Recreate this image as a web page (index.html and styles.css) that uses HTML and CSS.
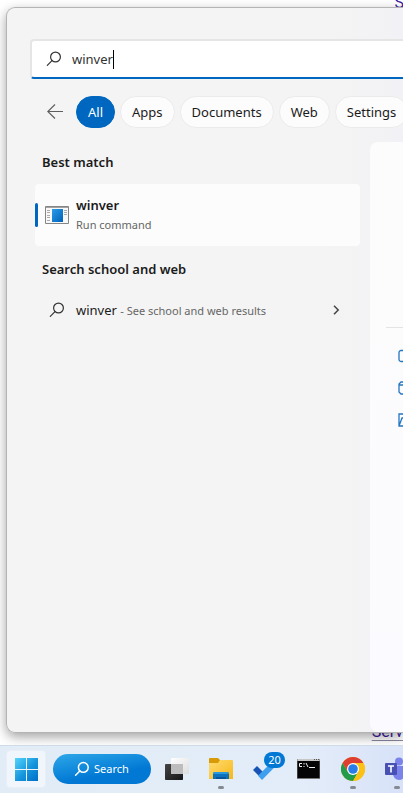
FILE: index.html
```html
<!DOCTYPE html>
<html lang="en">
<head>
<meta charset="utf-8">
<meta name="viewport" content="width=device-width, initial-scale=1">
<title>Search</title>
<link rel="stylesheet" href="styles.css">
</head>
<body>
<main class="desktop">
  <a class="page-link page-link-top" href="#">S</a>
  <a class="page-link page-link-bottom" href="#">Serv</a>
  <section class="panel">
    <label class="search-box">
      <svg class="lens" width="16" height="16" viewBox="0 0 16 16" fill="none" stroke="#333" stroke-width="1.2" stroke-linecap="round"><circle cx="9.5" cy="6" r="4.9"/><path d="M6 9.6 1.3 14.3"/></svg>
      <input class="search-input" type="text" value="winver" size="4" aria-label="Search">
      <span class="caret"></span>
    </label>
    <nav class="filters">
      <button class="back" type="button" aria-label="Back"><svg width="16" height="16" viewBox="0 0 16 16" fill="none" stroke="#5e5e5e" stroke-width="1.1"><path d="M16 7.5H.8M8 .5l-7.2 7L8 14.5"/></svg></button>
      <button class="filter filter-active" type="button">All</button>
      <button class="filter" type="button">Apps</button>
      <button class="filter" type="button">Documents</button>
      <button class="filter" type="button">Web</button>
      <button class="filter" type="button">Settings</button>
    </nav>
    <div class="content">
      <div class="results">
        <h2 class="heading">Best match</h2>
        <button class="best" type="button">
          <svg width="24" height="18" viewBox="0 0 24 18"><path fill="#f8f8f8" stroke="#858585" d="M.5.5h23v17H.5z"/><path fill="#a2a2a2" d="M1 1h22v1H1z"/><path stroke="#aaa" d="M2 4.5h3M2 6.5h3M2 9.5h3M2 11.5h3M2 14.5h3M19 4.5h3M19 6.5h3M19 8.5h3"/><defs><linearGradient id="app" x2="1" y2="1"><stop stop-color="#2b9be8"/><stop offset="1" stop-color="#0062b8"/></linearGradient></defs><path fill="url(#app)" d="M7 3h11v13H7z"/></svg>
          <span class="best-text"><strong class="best-name">winver</strong><span class="muted">Run command</span></span>
        </button>
        <h2 class="heading">Search school and web</h2>
        <button class="web-result" type="button">
          <svg class="lens" width="16" height="16" viewBox="0 0 16 16" fill="none" stroke="#333" stroke-width="1.2" stroke-linecap="round"><circle cx="9.5" cy="6" r="4.9"/><path d="M6 9.6 1.3 14.3"/></svg>
          <span class="web-text">winver <span class="muted">- See school and web results</span></span>
          <svg width="8" height="10" viewBox="0 0 8 10" fill="none" stroke="#444" stroke-width="1.5"><path d="m2 .8 4.2 4.2L2 9.2"/></svg>
        </button>
      </div>
      <aside class="preview">
        <div class="actions">
          <svg width="16" height="16" viewBox="0 0 16 16" fill="none" stroke="#2376c2" stroke-width="1.3"><rect x="1" y="2.5" width="14" height="11" rx="2"/></svg>
          <svg width="16" height="16" viewBox="0 0 16 16" fill="none" stroke="#2376c2" stroke-width="1.3"><path d="M3 2h4l2 2h6v10H3l-2-2V4zM1 5h14"/></svg>
          <svg width="16" height="16" viewBox="0 0 16 16" fill="none" stroke="#2376c2" stroke-width="1.3"><path d="M1 14V2h14v12zL4 6h11"/></svg>
        </div>
      </aside>
    </div>
  </section>
</main>
<footer class="taskbar">
  <button class="task task-start" type="button" aria-label="Start">
    <svg width="23" height="23" viewBox="0 0 23 23"><defs><linearGradient id="win" gradientUnits="userSpaceOnUse" x1="0" y1="0" x2="23" y2="23"><stop stop-color="#55d5fc"/><stop offset=".55" stop-color="#1594dc"/><stop offset="1" stop-color="#006fc9"/></linearGradient></defs><path fill="url(#win)" d="M0 0h11v11H0zM12 0h11v11H12zM0 12h11v11H0zM12 12h11v11H12z"/></svg>
  </button>
  <button class="task-search" type="button">
    <svg width="16" height="16" viewBox="0 0 16 16" fill="none" stroke="#fff" stroke-width="1.5" stroke-linecap="round"><circle cx="9.3" cy="6.4" r="4.9"/><path d="M5.8 10 1.6 14.2"/></svg>
    Search
  </button>
  <div class="apps">
    <button class="task" type="button" aria-label="Task view">
      <svg width="24" height="24" viewBox="0 0 24 24"><defs><linearGradient id="tvd" x2="1" y2="1"><stop stop-color="#454545"/><stop offset="1" stop-color="#151515"/></linearGradient><linearGradient id="tvl" x2="1" y2="1"><stop stop-color="#fff"/><stop offset="1" stop-color="#ddd"/></linearGradient></defs><rect y="7" width="18" height="16" rx=".8" fill="url(#tvd)"/><rect x="6" y="1" width="18" height="16" rx=".8" fill="url(#tvl)"/><path fill="#bdbdbd" d="M6 7h12v10H6z"/></svg>
    </button>
    <button class="task running" type="button" aria-label="File Explorer">
      <svg width="24" height="24" viewBox="0 0 24 24"><defs><linearGradient id="fold" x2="1" y2="1"><stop stop-color="#ffdc70"/><stop offset="1" stop-color="#f6b719"/></linearGradient></defs><path fill="#d99a08" d="M0 2q0-1 1-1h8l2 2h12v5H0z"/><path fill="url(#fold)" d="M0 6h9l2-3h12q1 0 1 1v18H0z"/><path fill="#0d72bd" d="M4 22v-5q0-2 2-2h12q2 0 2 2v5z"/><path fill="#2c99dd" d="M6 15h12q2 0 2 2H4q0-2 2-2z"/><path fill="#075596" d="M7 20h10v2H7z"/></svg>
    </button>
    <button class="task" type="button" aria-label="To Do">
      <svg width="24" height="24" viewBox="0 0 24 24"><path fill="#1753b4" d="m0 13 4-4 6 6-4 4z"/><path fill="#3f9fef" d="M5 18.8 17.8 6l4 4L9 23z"/></svg>
      <span class="badge">20</span>
    </button>
    <button class="task" type="button" aria-label="Command Prompt">
      <svg width="24" height="24" viewBox="0 0 24 24"><path fill="#777" d="M0 2h23v20H0z"/><path fill="#c6c6c6" d="M.5 2h22v2H.5z"/><path fill="#555" d="M17 2h1v1h-1zM19 2h1v1h-1zM21 2h1v1h-1z"/><path fill="#050505" d="M.5 4h22v17H.5z"/><path fill="none" stroke="#eee" d="M5 6.5H2.5v3H5M7 6v1.5M7 9v1M9 6l2 4M12 10.5h6"/></svg>
    </button>
    <button class="task running" type="button" aria-label="Chrome">
      <svg width="24" height="24" viewBox="0 0 24 24"><circle cx="12" cy="12" r="12" fill="#fbc116"/><path fill="#df3f32" d="M1.6 6A12 12 0 0 1 22.4 6H12L6.8 15z"/><path fill="#229b4b" d="M1.6 6A12 12 0 0 0 12 24l5.2-9L6.8 15z"/><path fill="#fbc116" d="M22.4 6A12 12 0 0 1 12 24l5.2-9L12 6z"/><circle cx="12" cy="12" r="6" fill="#fff"/><circle cx="12" cy="12" r="4.8" fill="#287de9"/></svg>
    </button>
    <button class="task running" type="button" aria-label="Teams">
      <svg width="24" height="24" viewBox="0 0 24 24"><circle cx="14" cy="4.5" r="4" fill="#7b83eb"/><circle cx="21.5" cy="5.5" r="2.5" fill="#5059c9"/><path fill="#7b83eb" d="M8 9h12v8a6 6 0 0 1-12 0z"/><path fill="#5059c9" d="M20 9h4v7a4 4 0 0 1-4 3z"/><rect y="6" width="12" height="12" rx="1" fill="#4850b4"/><path fill="none" stroke="#fff" stroke-width="1.6" d="M3 9h6M6 9v6.5"/></svg>
    </button>
  </div>
</footer>
</body>
</html>
```
FILE: styles.css
```css
* { box-sizing: border-box; }
body {
  margin: 0;
  min-height: 100vh;
  display: flex;
  flex-direction: column;
  overflow-x: hidden;
  background: #fff;
  color: #1b1b1b;
  font: 13px/20px "Noto Sans", "Open Sans", sans-serif;
}
button {
  margin: 0;
  padding: 0;
  border: 0;
  background: none;
  color: inherit;
  font: inherit;
  text-align: left;
}
svg { display: block; flex: none; }
.desktop {
  flex: 1;
  display: flex;
  position: relative;
  overflow: hidden;
  padding: 7px 0 12px 6px;
}
.page-link {
  position: absolute;
  font: 16px/20px Roboto, sans-serif;
  color: #401a9c;
}
.page-link-top { right: -1px; top: -7px; text-decoration: none; }
.page-link-bottom {
  right: 0;
  bottom: 3px;
  padding-bottom: 0;
  text-decoration-color: #8a86a0;
  text-underline-offset: 3px;
}
.panel {
  flex: 1;
  min-width: 0;
  position: relative;
  display: flex;
  flex-direction: column;
  border: 1px solid #b4b4b4;
  border-right: 0;
  border-radius: 9px 0 0 9px;
  background: linear-gradient(90deg, #f4f4f4 80%, #f2f2f6);
  box-shadow: 0 4px 12px rgba(0, 0, 0, .36);
}
.search-box {
  display: flex;
  align-items: center;
  height: 40px;
  margin: 31px 0 0 23px;
  padding-left: 14px;
  border: 2px solid #e5e5e5;
  border-right: 0;
  border-bottom-color: #0067c0;
  border-radius: 4px 0 0 4px;
  background: #fff;
}
.lens { margin-right: 10px; }
.search-input {
  field-sizing: content;
  padding: 0;
  border: 0;
  outline: 0;
  background: none;
  color: #333;
  font: inherit;
}
.caret { width: 1px; height: 19px; background: #000; }
.filters {
  display: flex;
  align-items: center;
  gap: 5px;
  margin-top: 17px;
  padding-left: 40px;
  overflow: hidden;
}
.back { margin-right: 8px; }
.filter {
  flex: none;
  height: 32px;
  padding: 0 11px;
  border: 1px solid #ebebeb;
  border-radius: 16px;
  background: #fcfcfc;
}
.filter-active { border-color: #0067c0; background: #0067c0; color: #fff; }
.content {
  flex: 1;
  display: grid;
  grid-template-columns: minmax(0, 1fr) 33px;
  gap: 10px;
  margin-top: 14px;
  padding-left: 28px;
}
.heading {
  margin: 10px 0 0 7px;
  font-size: 13px;
  font-weight: 600;
  line-height: 20px;
}
.best {
  display: flex;
  align-items: center;
  width: 100%;
  height: 62px;
  margin: 12px 0 13px;
  border-radius: 4px;
  background: #fcfcfc;
}
.best::before {
  content: "";
  width: 3px;
  height: 24px;
  margin-right: 7px;
  border-radius: 2px;
  background: #0067c0;
}
.best-text { display: flex; flex-direction: column; margin-left: 7px; }
.best-name { font-weight: 600; }
.muted { color: #666; font-size: 11px; }
.web-result {
  display: flex;
  align-items: center;
  width: 100%;
  height: 40px;
  margin-top: 11px;
  padding: 0 20px 0 14px;
}
.web-text { flex: 1; }
.web-result .lens { margin-right: 11px; }
.preview {
  overflow: hidden;
  padding: 185px 0 0 16px;
  border-radius: 8px 0 0 8px;
  background: linear-gradient(#fcfcfc, #fbfbff);
}
.actions {
  display: grid;
  gap: 16px;
  padding: 20px 0 0 12px;
  border-top: 1px solid #e4e4e6;
}
.taskbar {
  position: relative;
  display: flex;
  align-items: center;
  height: 48px;
  padding: 0 0 1px 6px;
  overflow: hidden;
  border-top: 1px solid #cfdce8;
  background: linear-gradient(90deg, #e1ecf6, #e3edf9 75%, #d8e2f8);
}
.task {
  flex: none;
  position: relative;
  display: grid;
  place-items: center;
  width: 24px;
  height: 38px;
}
.task-start {
  width: 40px;
  border: 1px solid #e9eff7;
  border-radius: 4px;
  background: #f1f5fc;
}
.task-search {
  flex: none;
  display: flex;
  align-items: center;
  gap: 4px;
  width: 98px;
  height: 30px;
  margin: 0 14px 0 7px;
  padding-left: 21px;
  border-radius: 15px;
  background: linear-gradient(170deg, #2ea7e9, #0078d4 65%);
  color: #fff;
  font-size: 11px;
}
.apps { display: flex; gap: 20px; }
.running::after {
  content: "";
  position: absolute;
  bottom: -1px;
  left: 9px;
  width: 6px;
  height: 3px;
  border-radius: 2px;
  background: #858a90;
}
.badge {
  position: absolute;
  left: 11px;
  top: 2px;
  width: 21px;
  border-radius: 8px;
  background: #0078d4;
  color: #fff;
  font-size: 11px;
  line-height: 16px;
  text-align: center;
}
```
